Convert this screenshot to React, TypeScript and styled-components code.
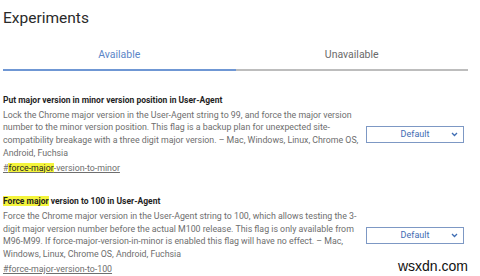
import React from 'react';
import styled, { createGlobalStyle } from 'styled-components';

const GlobalStyle = createGlobalStyle`
  body {
    margin: 0;
    background: #ffffff;
    font-family: Roboto, 'Liberation Sans', sans-serif;
  }
`;

const Page = styled.div`
  position: relative;
  width: 480px;
  height: 276px;
  overflow: hidden;
  background: #ffffff;
`;

const Title = styled.h1`
  margin: 0;
  padding: 9px 0 0 3px;
  height: 39px;
  box-sizing: border-box;
  font-size: 15.5px;
  font-weight: 400;
  color: #2a2a2a;
`;

const Tabs = styled.div`
  display: flex;
  margin: 0 12px 0 3px;
`;

const Tab = styled.div<{ $active?: boolean }>`
  flex: 1;
  height: 30px;
  display: flex;
  align-items: center;
  justify-content: center;
  font-size: 10.5px;
  color: ${p => (p.$active ? '#5b86c8' : '#6a6a6a')};
  border-bottom: 2px solid ${p => (p.$active ? '#6f97d4' : '#bdbdbd')};
`;

const List = styled.div`
  padding: 23px 0 0 3px;
  display: flex;
  flex-direction: column;
  gap: 21px;
`;

const Row = styled.div`
  display: flex;
  align-items: center;
`;

const Info = styled.div`
  width: 350px;
  font-size: 8.8px;
  line-height: 12.7px;
  white-space: nowrap;
`;

const Name = styled.div`
  font-size: 8.5px;
  font-weight: 700;
  color: #1f1f1f;
  margin-bottom: 2px;
`;

const Line = styled.div`
  color: #6e6e6e;
`;

const Anchor = styled.div`
  margin-top: 2px;
  color: #6e6e6e;
  text-decoration: underline;
`;

const Mark = styled.span`
  background: #f4f43c;
  color: #1f1f1f;
`;

const Select = styled.div`
  margin-left: 13px;
  width: 98px;
  height: 17px;
  box-sizing: border-box;
  border: 1px solid #7d98c4;
  display: flex;
  align-items: center;
  position: relative;
  justify-content: center;
  font-size: 9px;
  color: #3f6db3;
`;

const Chevron = styled.svg`
  position: absolute;
  right: 5px;
  top: 5px;
`;

const Watermark = styled.div`
  position: absolute;
  right: 12px;
  bottom: 2px;
  font-family: 'Liberation Sans', Arial, sans-serif;
  font-size: 14px;
  color: #111111;
`;

const Dropdown = () => (
  <Select>
    Default
    <Chevron width="7" height="5" viewBox="0 0 7 5">
      <path d="M1 1 L3.5 3.5 L6 1" stroke="#3f6db3" strokeWidth="1.3" fill="none" />
    </Chevron>
  </Select>
);

const flags = [
  {
    name: <>Put major version in minor version position in User-Agent</>,
    lines: [
      'Lock the Chrome major version in the User-Agent string to 99, and force the major version',
      'number to the minor version position. This flag is a backup plan for unexpected site-',
      'compatibility breakage with a three digit major version. – Mac, Windows, Linux, Chrome OS,',
      'Android, Fuchsia',
    ],
    anchor: <>#<Mark>force-major</Mark>-version-to-minor</>,
  },
  {
    name: <><Mark>Force major</Mark> version to 100 in User-Agent</>,
    lines: [
      'Force the Chrome major version in the User-Agent string to 100, which allows testing the 3-',
      'digit major version number before the actual M100 release. This flag is only available from',
      'M96-M99. If force-major-version-in-minor is enabled this flag will have no effect. – Mac,',
      'Windows, Linux, Chrome OS, Android, Fuchsia',
    ],
    anchor: <>#force-major-version-to-100</>,
  },
];

export default function App() {
  return (
    <Page>
      <GlobalStyle />
      <Title>Experiments</Title>
      <Tabs>
        <Tab $active>Available</Tab>
        <Tab>Unavailable</Tab>
      </Tabs>
      <List>
        {flags.map((f, i) => (
          <Row key={i}>
            <Info>
              <Name>{f.name}</Name>
              {f.lines.map(l => (
                <Line key={l}>{l}</Line>
              ))}
              <Anchor>{f.anchor}</Anchor>
            </Info>
            <Dropdown />
          </Row>
        ))}
      </List>
      <Watermark>wsxdn.com</Watermark>
    </Page>
  );
}
